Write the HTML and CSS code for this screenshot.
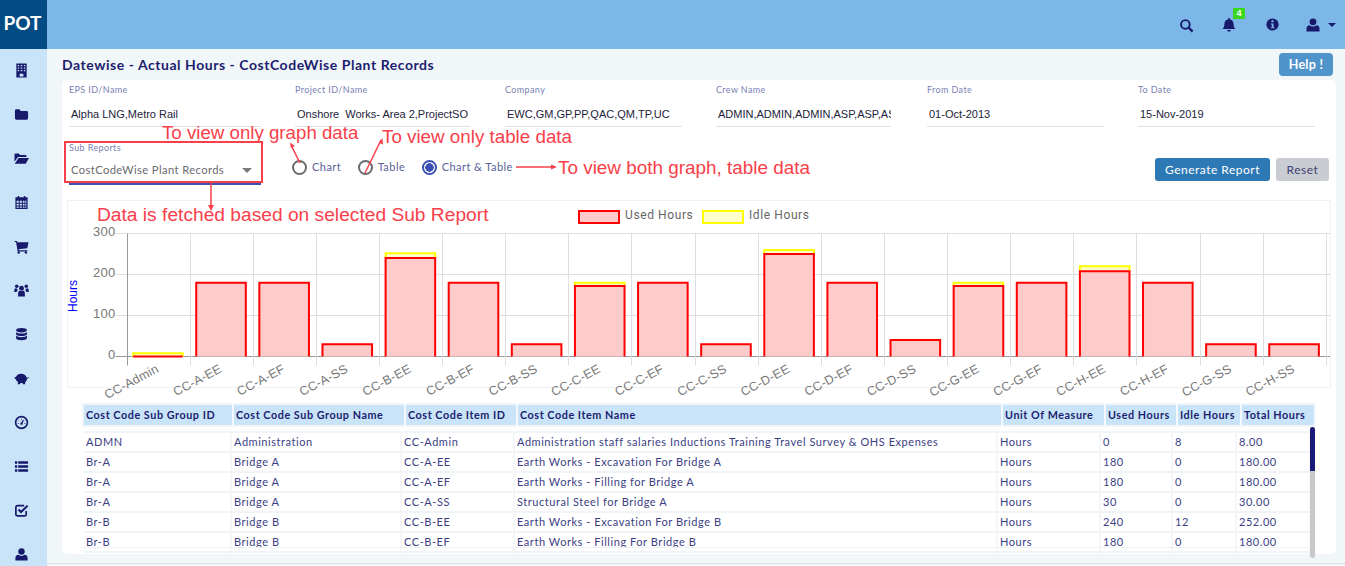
FILE: index.html
```html
<!DOCTYPE html>
<html lang="en">
<head>
<meta charset="utf-8">
<title>Datewise - Actual Hours - CostCodeWise Plant Records</title>
<link rel="stylesheet" href="styles.css">
</head>
<body>
<header class="topbar">
  <div class="logo">POT</div>
  <div class="top-icons">
    <svg class="ti ti-search" viewBox="0 0 16 16"><circle cx="6.8" cy="6.8" r="4.6" fill="none" stroke="#17196b" stroke-width="2"/><path d="M10.2 10.2L14.5 14.5" stroke="#17196b" stroke-width="2.4"/></svg>
    <span class="bell-wrap">
      <svg class="ti ti-bell" viewBox="0 0 16 16"><path fill="#17196b" d="M8 1a1 1 0 0 1 1 1v.6c2.3.4 3.6 2.2 3.6 4.6 0 2.4.7 3.6 2 4.8H1.400c1.300-1.200 2-2.400 2-4.800C3.400 4.800 4.700 3 7 2.600V2a1 1 0 0 1 1-1zM6.200 13h3.600a1.800 1.800 0 0 1-3.600 0z"/></svg>
      <span class="badge">4</span>
    </span>
    <svg class="ti ti-info" viewBox="0 0 16 16"><circle cx="8" cy="8" r="6.500" fill="#17196b"/><rect x="6.900" y="3.500" width="2.200" height="2.200" fill="#7cb7e8"/><path fill="#7cb7e8" d="M6.200 6.800h2.900v4h1v1.300H6.200v-1.300h1v-2.700h-1z"/></svg>
    <span class="user-wrap">
      <svg class="ti ti-user" viewBox="0 0 16 16"><circle cx="8" cy="4.800" r="3.400" fill="#17196b"/><path fill="#17196b" d="M1.500 14.500v-2.800c0-2 1.300-3.200 3-3.400 1 .8 2.200 1.200 3.500 1.200s2.500-.4 3.500-1.200c1.700.2 3 1.400 3 3.400v2.800z"/></svg>
      <i class="caret"></i>
    </span>
  </div>
</header>

<div class="main">
  <nav class="sidebar">
    <svg class="si" viewBox="0 0 16 16"><path fill="#17196b" fill-rule="evenodd" d="M2.500 .5h11v15h-11zM4 2v1.500h1.500V2zM7.200 2v1.500h1.600V2zM10.500 2v1.500H12V2zM4 4.700v1.500h1.500V4.700zM7.200 4.700v1.500h1.600V4.700zM10.500 4.700v1.500H12V4.700zM4 7.400v1.500h1.500V7.400zM7.200 7.400v1.500h1.600V7.400zM10.500 7.400v1.500H12V7.400zM6 11.500v3h4v-3z"/></svg>
    <svg class="si" viewBox="0 0 16 16"><path fill="#17196b" d="M1 4a1.500 1.500 0 0 1 1.500-1.500h3.200L7.200 4.200h6.300A1.500 1.500 0 0 1 15 5.700v6.300a1.500 1.500 0 0 1-1.500 1.500h-11A1.500 1.500 0 0 1 1 12z"/></svg>
    <svg class="si" viewBox="0 0 16 16"><path fill="#17196b" d="M.5 4A1.300 1.300 0 0 1 1.800 2.700h3.300L6.500 4.200h5.600a1.200 1.200 0 0 1 1.200 1.200V6.500H4.200L.5 11.500zM4.800 7.500H16l-3.500 6H.8z"/></svg>
    <svg class="si" viewBox="0 0 16 16"><path fill="#17196b" fill-rule="evenodd" d="M4 1h1.500v1.500h5V1H12v1.500h2.500V15h-13V2.500H4zM2.800 6.200v2h2.300v-2zM6.100 6.200v2h2.300v-2zM9.400 6.200v2h1.800v-2zM12 6.200v2h1.200v-2zM2.800 9.200v2h2.300v-2zM6.100 9.200v2h2.300v-2zM9.400 9.200v2h1.800v-2zM12 9.200v2h1.200v-2zM2.800 12.200v1.500h2.300v-1.500zM6.100 12.200v1.500h2.300v-1.500zM9.400 12.200v1.500h1.800v-1.500zM12 12.200v1.500h1.200v-1.500z"/></svg>
    <svg class="si" viewBox="0 0 16 16"><path fill="#17196b" d="M.5 2h2.600l.4 1.500H15.500l-1.300 6.300-9.300 1.100.3 1.100h9v1.200H3.900L2.200 3.300H.5z"/><circle cx="5" cy="14.300" r="1.300" fill="#17196b"/><circle cx="12.700" cy="14.300" r="1.300" fill="#17196b"/></svg>
    <svg class="si" viewBox="0 0 16 16"><circle cx="8" cy="5.500" r="2.600" fill="#17196b"/><circle cx="2.900" cy="3.500" r="1.900" fill="#17196b"/><circle cx="13.100" cy="3.500" r="1.900" fill="#17196b"/><path fill="#17196b" d="M4.400 14.500v-3.500c0-1.700 1-2.800 2-2.900.5.300 1 .5 1.600.5s1.100-.2 1.600-.5c1 .1 2 1.200 2 2.900v3.500z"/><path fill="#17196b" d="M.3 9.700V7.500c0-1 .6-1.900 1.600-2 .4.300.8.400 1.200.4l.9 1.500C3.200 8.200 2.900 9 2.800 9.700zM15.700 9.700V7.500c0-1-.6-1.900-1.600-2-.4.300-.8.400-1.200.4l-.9 1.500c.8.800 1.100 1.600 1.200 2.300z"/></svg>
    <svg class="si" viewBox="0 0 16 16"><ellipse cx="8" cy="3.400" rx="5.800" ry="2.400" fill="#17196b"/><path fill="#17196b" d="M2.200 5.200c1 1.200 3.300 1.800 5.800 1.800s4.800-.6 5.800-1.800v2.300C13.800 8.900 11 9.700 8 9.700s-5.800-.8-5.800-2.200zM2.200 9c1 1.200 3.300 1.800 5.800 1.800s4.800-.6 5.800-1.800v2.600c0 1.500-2.800 2.400-5.800 2.400s-5.800-.9-5.800-2.400z"/></svg>
    <svg class="si" viewBox="0 0 16 16"><path fill="#17196b" d="M.3 7l1.700-.5C3 4.300 5 3 7.500 3c3 0 5.300 1.300 6.200 4.300.7 0 1.200-.3 1.500-1l.6.300c-.3 1-1 1.600-2 1.700 0 1.500-.7 2.800-1.900 3.700V14H9.300v-1.200H6.700V14H4.100v-2.500C2.900 10.700 2.200 9.700 1.900 8.700 1.200 8.500.6 8 .3 7z"/></svg>
    <svg class="si" viewBox="0 0 16 16"><circle cx="8" cy="8" r="6.300" fill="none" stroke="#17196b" stroke-width="1.800"/><path d="M8 9L10 5.500" stroke="#17196b" stroke-width="1.300"/><circle cx="8" cy="9.200" r="1.300" fill="#17196b"/><path d="M4 9h1M5 6l.6.600M8 4v1M11 6l-.6.600M12 9h-1" stroke="#17196b" stroke-width=".9"/></svg>
    <svg class="si" viewBox="0 0 16 16"><path fill="#17196b" d="M1 2.500h2.500v2.500H1zM4.500 2.500H15v2.500H4.500zM1 6.700h2.500v2.500H1zM4.500 6.700H15v2.500H4.500zM1 11h2.500v2.500H1zM4.500 11H15v2.500H4.500z"/></svg>
    <svg class="si" viewBox="0 0 16 16"><path fill="none" stroke="#17196b" stroke-width="1.800" d="M13 8.500V12a1.800 1.800 0 0 1-1.800 1.800H3.800A1.800 1.800 0 0 1 2 12V4.500a1.800 1.800 0 0 1 1.800-1.800h7"/><path fill="none" stroke="#17196b" stroke-width="2.200" d="M4.800 7l2.700 2.700L14.500 2.800"/></svg>
    <svg class="si" viewBox="0 0 16 16"><circle cx="8" cy="4.800" r="3.400" fill="#17196b"/><path fill="#17196b" d="M1.500 14.500v-2.800c0-2 1.300-3.200 3-3.400 1 .8 2.200 1.200 3.500 1.200s2.500-.4 3.500-1.200c1.700.2 3 1.400 3 3.400v2.800z"/></svg>
  </nav>

  <main class="content">
    <div class="title-row">
      <h1>Datewise - Actual Hours - CostCodeWise Plant Records</h1>
      <button class="help">Help !</button>
    </div>

    <section class="card">
      <div class="filters">
        <div class="field f1"><label>EPS ID/Name</label><div class="val">Alpha LNG,Metro Rail</div></div>
        <div class="field f2"><label>Project ID/Name</label><div class="val">Onshore&nbsp; Works- Area 2,ProjectSO</div></div>
        <div class="field f3"><label>Company</label><div class="val">EWC,GM,GP,PP,QAC,QM,TP,UC</div></div>
        <div class="field f4"><label>Crew Name</label><div class="val">ADMIN,ADMIN,ADMIN,ASP,ASP,AS</div></div>
        <div class="field f5"><label>From Date</label><div class="val">01-Oct-2013</div></div>
        <div class="field f6"><label>To Date</label><div class="val">15-Nov-2019</div></div>
      </div>

      <div class="controls">
        <div class="select">
          <label>Sub Reports</label>
          <div class="select-val">CostCodeWise Plant Records<i class="sel-caret"></i></div>
        </div>
        <div class="radios">
          <span class="radio"><i class="dot"></i>Chart</span>
          <span class="radio"><i class="dot"></i>Table</span>
          <span class="radio on"><i class="dot"></i>Chart &amp; Table</span>
        </div>
        <div class="actions">
          <button class="gen">Generate Report</button>
          <button class="reset">Reset</button>
        </div>
      </div>

      <div class="chart">
        <svg id="chart" width="1264" height="188" viewBox="0 0 1264 188"></svg>
      </div>

      <div class="tablewrap">
        <table class="thead">
          <colgroup><col class="h1"><col class="h2"><col class="h3"><col class="h4"><col class="h5"><col class="h6"><col class="h7"><col class="h8"></colgroup>
          <tr><th>Cost Code Sub Group ID</th><th>Cost Code Sub Group Name</th><th>Cost Code Item ID</th><th>Cost Code Item Name</th><th>Unit Of Measure</th><th>Used Hours</th><th>Idle Hours</th><th>Total Hours</th></tr>
        </table>
        <div class="tbody">
          <table class="rows">
            <colgroup><col class="b1"><col class="b2"><col class="b3"><col class="b4"><col class="b5"><col class="b6"><col class="b7"><col class="b8"></colgroup>
            <tr><td>ADMN</td><td>Administration</td><td>CC-Admin</td><td>Administration staff salaries Inductions Training Travel Survey &amp; OHS Expenses</td><td>Hours</td><td>0</td><td>8</td><td>8.00</td></tr>
            <tr><td>Br-A</td><td>Bridge A</td><td>CC-A-EE</td><td>Earth Works - Excavation For Bridge A</td><td>Hours</td><td>180</td><td>0</td><td>180.00</td></tr>
            <tr><td>Br-A</td><td>Bridge A</td><td>CC-A-EF</td><td>Earth Works - Filling for Bridge A</td><td>Hours</td><td>180</td><td>0</td><td>180.00</td></tr>
            <tr><td>Br-A</td><td>Bridge A</td><td>CC-A-SS</td><td>Structural Steel for Bridge A</td><td>Hours</td><td>30</td><td>0</td><td>30.00</td></tr>
            <tr><td>Br-B</td><td>Bridge B</td><td>CC-B-EE</td><td>Earth Works - Excavation For Bridge B</td><td>Hours</td><td>240</td><td>12</td><td>252.00</td></tr>
            <tr><td>Br-B</td><td>Bridge B</td><td>CC-B-EF</td><td>Earth Works - Filling For Bridge B</td><td>Hours</td><td>180</td><td>0</td><td>180.00</td></tr>
            <tr><td>&nbsp;</td><td></td><td></td><td></td><td></td><td></td><td></td><td></td></tr>
          </table>
          <div class="scroll"><div class="thumb"></div></div>
        </div>
      </div>
    </section>
  </main>
</div>

<div class="note n1">To view only graph data</div>
<div class="note n2">To view only table data</div>
<div class="note n3">To view both graph, table data</div>
<div class="note n4">Data is fetched based on selected Sub Report</div>
<div class="redbox"></div>
<svg class="arrows" width="1345" height="566" viewBox="0 0 1345 566">
  <g fill="none" stroke="#f9404a" stroke-width="1.500">
    <path d="M300 163L291 145"/><path d="M365 173L381 140"/><path d="M516 167H555"/><path d="M211 183V207"/>
  </g>
  <g fill="#f9404a">
    <path d="M290 142.500l5 3.500-4 2z"/><path d="M382.500 138l.5 6.500-4-1.800z"/><path d="M557 167l-6-2.500v5z"/><path d="M211 211l-3-6h6z"/>
  </g>
</svg>
<script src="chart.js"></script>
</body>
</html>
```
FILE: styles.css
```css
* { box-sizing: border-box; }
html, body { margin: 0; padding: 0; }
body { width: 1345px; height: 566px; overflow: hidden; font-family: Lato, sans-serif; color: #1c1e70; background: #f1f6f9; position: relative; }

.topbar { height: 49px; background: #7cb7e8; display: flex; align-items: center; }
.logo { width: 47px; height: 49px; padding-right: 2px; background: #024b84; color: #fff; font: 700 19px/45px Lato, sans-serif; text-align: center; }
.top-icons { margin-left: auto; display: flex; align-items: center; padding-right: 9px; }
.ti { display: block; width: 16px; height: 16px; }
.ti-search { width: 15px; height: 15px; margin-top: 1px; }
.bell-wrap { position: relative; margin-left: 27px; }
.badge { position: absolute; left: 12px; top: -9px; width: 12px; height: 11px; background: #39d81e; color: #fff; font: 700 9px/11px "Liberation Sans", sans-serif; text-align: center; border-radius: 1px; }
.ti-info { margin-left: 28px; width: 15px; height: 15px; }
.user-wrap { display: flex; align-items: center; margin-left: 25px; }
.caret { margin-left: 7px; width: 0; height: 0; border-left: 4px solid transparent; border-right: 4px solid transparent; border-top: 4px solid #17196b; }

.main { display: flex; align-items: flex-start; height: 517px; }
.sidebar { width: 47px; height: 517px; background: #c9e4f8; display: flex; flex-direction: column; align-items: center; padding: 14px 4px 0 0; gap: 29px; overflow: hidden; flex: none; }
.si { width: 15px; height: 15px; flex: none; display: block; }

.content { width: 1298px; height: 515px; padding: 4px 9px 0 15px; border-bottom: 1px solid #d8dfe5; }
.title-row { display: flex; justify-content: space-between; align-items: flex-start; height: 27px; padding-right: 3px; }
h1 { margin: 1px 0 0; font: 700 14px/22px Lato, sans-serif; letter-spacing: .54px; color: #1c1e70; }
.help { width: 54px; height: 23px; border: 0; border-radius: 4px; background: #4f94cb; color: #fff; font: 700 12.500px Lato, sans-serif; letter-spacing: .3px; padding: 0; }

.card { width: 1274px; height: 474px; background: #fff; border-radius: 5px; padding: 0 0 0 5px; }
label { display: block; font: 400 9px/11px Lato, sans-serif; letter-spacing: .38px; color: #7b7fb5; }

.filters { display: flex; padding: 4px 0 0 2px; height: 47px; }
.field { flex: none; height: 43px; border-bottom: 1px solid #dfe1e4; }
.f1 { width: 192px; margin-right: 34px; }
.f2 { width: 175px; margin-right: 35px; }
.f3 { width: 177px; margin-right: 34px; }
.f4 { width: 175px; margin-right: 36px; }
.f5 { width: 177px; margin-right: 34px; }
.f6 { width: 177px; margin-right: 0; }
.val { margin-top: 11px; padding-left: 2px; font: 400 11px/16px "Liberation Sans", sans-serif; color: #22233a; white-space: nowrap; overflow: hidden; }

.controls { display: flex; align-items: flex-start; height: 73px; position: relative; padding: 10px 0 0 2px; }
.select { width: 192px; height: 48px; border-bottom: 3px solid #3d51b5; padding-top: 5px; flex: none; }
.select-val { display: flex; justify-content: space-between; align-items: center; margin-top: 8px; padding: 0 9px 0 2px; font: 400 11.200px/18px Lato, sans-serif; letter-spacing: .4px; color: #6a6a70; }
.sel-caret { width: 0; height: 0; border-left: 5px solid transparent; border-right: 5px solid transparent; border-top: 5px solid #7a7a80; }
.radios { display: flex; margin-left: 31px; margin-top: 22px; }
.radio { display: flex; align-items: flex-start; font: 400 11px/16px Lato, sans-serif; letter-spacing: .45px; color: #5a5f97; margin-right: 16.500px; }
.dot { width: 15px; height: 15px; margin-top: 1px; border: 2px solid #6a6a70; border-radius: 50%; margin-right: 5px; background: #fff; flex: none; }
.on .dot { border-color: #3d51b5; background: radial-gradient(circle, #3d51b5 0 4px, #fff 4.500px); }
.actions { margin-left: auto; display: flex; gap: 6px; margin-top: 21px; padding-right: 7px; }
.gen, .reset { height: 23px; border: 0; border-radius: 3px; font: 400 12px Lato, sans-serif; letter-spacing: .5px; padding: 0; }
.gen { width: 115px; background: #2d79b5; color: #fff; }
.reset { width: 53px; background: #c9ccd2; color: #3e4170; }

.chart { width: 1264px; height: 188px; }
.chart svg { display: block; overflow: visible; }
.chart text { font-family: "Liberation Sans", sans-serif; fill: #777; }
.chart .legend { font-family: Roboto, sans-serif; font-size: 12px; letter-spacing: .6px; fill: #666; }

.tablewrap { margin: 15px 0 0 15px; width: 1233px; }
table { border-collapse: collapse; table-layout: fixed; }
.thead { width: 1232px; border: 2px solid #f1f5f8; background: #fff; }
th { height: 20px; padding: 0 0 0 2px; background: #c9e4f8; border-right: 2px solid #f6f9fb; font: 700 10.800px/20px Lato, sans-serif; letter-spacing: .55px; color: #1c1e70; text-align: left; white-space: nowrap; overflow: hidden; }
.h1 { width: 150px; } .h2 { width: 172px; } .h3 { width: 112px; } .h4 { width: 485px; } .h5 { width: 103px; } .h6 { width: 72px; } .h7 { width: 64px; } .h8 { width: 74px; }
.tbody { position: relative; height: 131px; padding-top: 4px; overflow: hidden; }
.tbody::after { content: ""; position: absolute; left: 0; top: 120px; width: 1226px; height: 1px; background: #edf1f4; }
.rows { width: 1226px; margin-left: 2px; border-top: 2px solid #f1f5f8; }
td { height: 20px; padding: 0 0 0 2px; border-right: 2px solid #f4f6f8; border-bottom: 2px solid #f1f4f6; font: 400 11px/18px Lato, sans-serif; letter-spacing: .55px; color: #3b3e84; white-space: nowrap; overflow: hidden; }
.b1 { width: 147px; } .b2 { width: 170px; } .b3 { width: 113px; } .b4 { width: 483px; } .b5 { width: 103px; } .b6 { width: 72px; } .b7 { width: 64px; } .b8 { width: 74px; }
.scroll { position: absolute; right: 0; top: 0; width: 5px; height: 131px; background: #c9c9c9; border-radius: 3px; }
.thumb { width: 5px; height: 44px; background: #1a1a78; border-radius: 3px 3px 0 0; }

.note { position: absolute; font: 400 18.700px/22px "Liberation Sans", sans-serif; color: #f9404a; white-space: nowrap; }
.n1 { left: 162px; top: 122px; }
.n2 { left: 382px; top: 126px; font-size: 18.800px; }
.n3 { left: 558px; top: 157px; font-size: 18.900px; }
.n4 { left: 97px; top: 204px; font-size: 19.200px; }
.redbox { position: absolute; left: 63.500px; top: 141px; width: 199px; height: 42px; border: 2px solid #f9404a; }
.arrows { position: absolute; left: 0; top: 0; pointer-events: none; }
```
FILE: chart.js
```js
var NS = 'http://www.w3.org/2000/svg';
var svg = document.getElementById('chart');
var ox = 67, oy = 200;
function el(name, attrs, text) {
  var e = document.createElementNS(NS, name);
  for (var k in attrs) e.setAttribute(k, attrs[k]);
  if (text !== undefined) e.textContent = text;
  svg.appendChild(e);
  return e;
}
function bar(x, top, w, bottom, fill, stroke) {
  el('rect', {x: x, y: top, width: w, height: bottom - top, fill: fill});
  el('path', {d: 'M' + x + ' ' + bottom + 'V' + top + 'H' + (x + w) + 'V' + bottom, fill: 'none', stroke: stroke, 'stroke-width': 2});
}
var data = [['CC-Admin',0,8],['CC-A-EE',180,0],['CC-A-EF',180,0],['CC-A-SS',30,0],['CC-B-EE',240,12],['CC-B-EF',180,0],['CC-B-SS',30,0],['CC-C-EE',172,8],['CC-C-EF',180,0],['CC-C-SS',30,0],['CC-D-EE',250,10],['CC-D-EF',180,0],['CC-D-SS',40,0],['CC-G-EE',172,8],['CC-G-EF',180,0],['CC-H-EE',208,12],['CC-H-EF',180,0],['CC-G-SS',30,0],['CC-H-SS',30,0]];
var x0 = 126.5 - ox, step = 63.12, y0 = 356.5 - oy, sc = 0.41;
el('rect', {x: .5, y: .5, width: 1263, height: 187, fill: '#fff', stroke: '#f0f1f3'});
[300,200,100,0].forEach(function (v) {
  var y = y0 - v * sc;
  el('line', {x1: x0 - 11, x2: 1263, y1: y, y2: y, stroke: v ? '#dedede' : '#9a9a9a'});
  el('text', {x: x0 - 11, y: y + 2, 'text-anchor': 'end', 'font-size': 13, 'letter-spacing': .3}, v);
});
for (var i = 0; i <= 19; i++) {
  var lx = Math.round(x0 + i * step) + .5;
  el('line', {x1: lx, x2: lx, y1: y0 - 300 * sc, y2: y0 + 9, stroke: i ? '#dedede' : '#9a9a9a'});
}
data.forEach(function (d, i) {
  var bx = x0 + i * step + 6.6, w = 49.6;
  var uh = d[1] * sc, ih = d[2] * sc;
  if (ih) bar(bx, y0 - uh - ih, w, y0 - uh, '#ffffcc', '#ffff00');
  bar(bx, y0 - uh, w, y0, '#ffcaca', '#ff0000');
  var cx = x0 + i * step + 33, cy = y0 + 15;
  el('text', {x: cx, y: cy, 'text-anchor': 'end', 'font-size': 12.5, 'letter-spacing': .2, transform: 'rotate(-28 ' + cx + ' ' + cy + ')'}, d[0]);
});
var t = el('text', {x: 10, y: 96, 'text-anchor': 'middle', 'font-size': 12, transform: 'rotate(-90 10 96)'}, 'Hours');
t.style.fill = '#0000ff';
el('rect', {x: 512, y: 11, width: 40, height: 12, fill: '#ffcaca', stroke: '#ff0000', 'stroke-width': 2});
el('text', {'class': 'legend', x: 558, y: 19}, 'Used Hours');
el('rect', {x: 636, y: 11, width: 40, height: 12, fill: '#ffffcc', stroke: '#ffff00', 'stroke-width': 2});
el('text', {'class': 'legend', x: 682, y: 19}, 'Idle Hours');
```
